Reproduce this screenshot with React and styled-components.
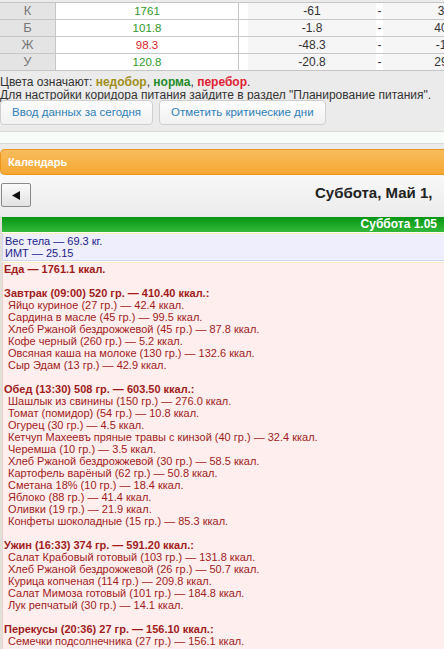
import React from "react";
import styled, { createGlobalStyle } from "styled-components";

const Global = createGlobalStyle`
  html, body { margin: 0; padding: 0; }
  body {
    background: #ebebeb;
    font-family: "Liberation Sans", Arial, sans-serif;
    overflow: hidden;
  }
`;

const Page = styled.div`
  width: 444px;
  overflow: hidden;
`;

const Top = styled.div`
  padding-top: 2px;
  background: #ebebeb;
`;

const StatsTable = styled.div`
  width: 640px;
  border-top: 1px solid #c6c6c6;
`;

const Row = styled.div`
  display: grid;
  grid-template-columns: 56px 183px 1fr;
  height: 16px;
  border-bottom: 1px solid #c6c6c6;
  background: #fff;
`;

const Label = styled.div`
  background: #e4e4e4;
  border-right: 1px solid #c6c6c6;
  color: #777;
  font-size: 13px;
  line-height: 16px;
  text-align: center;
`;

const Value = styled.div`
  border-right: 1px solid #c6c6c6;
  color: ${(p) => (p.$over ? "#e0202a" : "#2f9a2a")};
  font-size: 11.5px;
  line-height: 16px;
  text-align: center;
`;

const Range = styled.div`
  display: flex;
  align-items: stretch;
  padding-left: 9px;
`;

const RangeCell = styled.div`
  width: ${(p) => p.$w}px;
  flex-shrink: 0;
  background: #f6f6f6;
  color: #333;
  font-size: 12px;
  line-height: 16px;
  text-align: center;
`;

const Dash = styled.div`
  width: 7px;
  flex-shrink: 0;
  color: #333;
  font-size: 12px;
  line-height: 16px;
  text-align: center;
`;

const Legend = styled.div`
  margin-top: 5px;
  font-size: 12px;
  line-height: 13px;
  color: #333;
  white-space: nowrap;
`;

const Mark = styled.b`
  color: ${(p) => p.$c};
`;

const Buttons = styled.div`
  display: flex;
  gap: 6px;
  margin-top: -2px;
`;

const Button = styled.div`
  height: 23px;
  padding: 0 11px;
  border: 1px solid #cfcfcf;
  border-radius: 4px;
  background: linear-gradient(#fdfdfd, #f1f1f1);
  color: #2f80b8;
  font-size: 11.5px;
  line-height: 23px;
  white-space: nowrap;
`;

const Band = styled.div`
  margin-top: 6px;
  height: 11px;
  border-top: 1px solid #d8d8d8;
  border-bottom: 1px solid #d8d8d8;
  background: #f8fcf8;
`;

const Panel = styled.div`
  margin-top: 5px;
`;

const PanelHeader = styled.div`
  height: 24px;
  border: 1px solid #ec9418;
  border-right: none;
  border-radius: 5px 0 0 5px;
  background: linear-gradient(#f8bc5c, #f5a834);
  color: #fff;
  font-weight: bold;
  font-size: 11px;
  line-height: 24px;
  padding-left: 7px;
`;

const DateNav = styled.div`
  display: flex;
  align-items: flex-start;
  height: 34px;
  padding-top: 8px;
  background: linear-gradient(#f8f8f8, #ebebeb);
`;

const NavButton = styled.div`
  flex-shrink: 0;
  margin-left: 1px;
  width: 28px;
  height: 22px;
  border: 1px solid #8a8a8a;
  border-radius: 2px;
  background: linear-gradient(#fbfbfb, #e2e2e2);
  display: flex;
  align-items: center;
  justify-content: center;
`;

const DateTitle = styled.div`
  flex-shrink: 0;
  margin-left: 284px;
  margin-top: 1px;
  font-size: 15px;
  font-weight: bold;
  color: #222;
  white-space: nowrap;
`;

const Year = styled.span`
  margin-left: 14px;
`;

const Day = styled.div`
  border-left: 2px solid #e0e0d8;
  background: #fff;
`;

const DayHeader = styled.div`
  height: 15px;
  background: linear-gradient(#079614, #33b83a);
  color: #fff;
  font-weight: bold;
  font-size: 12px;
  line-height: 15px;
  text-align: right;
  padding-right: 7px;
`;

const InfoBox = styled.div`
  margin-top: 1px;
  border-top: 1px solid #f6efbf;
  background: ${(p) => p.$bg};
  color: ${(p) => p.$fg};
  border-left: 1px solid ${(p) => p.$bd};
  border-bottom: 1px solid ${(p) => p.$bd};
  padding: ${(p) => p.$pad};
  font-size: 11px;
  line-height: 12px;
  white-space: pre;
`;

const Line = styled.div`
  font-weight: ${(p) => (p.$bold ? "bold" : "normal")};
  padding-left: ${(p) => (p.$item ? "4px" : "0")};
  min-height: 12px;
`;

const rows = [
  { l: "К", v: "1761", a: "-61", b: "3" },
  { l: "Б", v: "101.8", a: "-1.8", b: "40" },
  { l: "Ж", v: "98.3", a: "-48.3", b: "-1", over: true },
  { l: "У", v: "120.8", a: "-20.8", b: "29" },
];

const food = [
  ["h", "Еда — 1761.1 ккал."],
  ["b", ""],
  ["h", "Завтрак (09:00) 520 гр. — 410.40 ккал.:"],
  ["i", "Яйцо куриное (27 гр.) — 42.4 ккал."],
  ["i", "Сардина в масле (45 гр.) — 99.5 ккал."],
  ["i", "Хлеб Ржаной бездрожжевой (45 гр.) — 87.8 ккал."],
  ["i", "Кофе черный (260 гр.) — 5.2 ккал."],
  ["i", "Овсяная каша на молоке (130 гр.) — 132.6 ккал."],
  ["i", "Сыр Эдам (13 гр.) — 42.9 ккал."],
  ["b", ""],
  ["h", "Обед (13:30) 508 гр. — 603.50 ккал.:"],
  ["i", "Шашлык из свинины (150 гр.) — 276.0 ккал."],
  ["i", "Томат (помидор) (54 гр.) — 10.8 ккал."],
  ["i", "Огурец (30 гр.) — 4.5 ккал."],
  ["i", "Кетчуп Махеевъ пряные травы с кинзой (40 гр.) — 32.4 ккал."],
  ["i", "Черемша (10 гр.) — 3.5 ккал."],
  ["i", "Хлеб Ржаной бездрожжевой (30 гр.) — 58.5 ккал."],
  ["i", "Картофель варёный (62 гр.) — 50.8 ккал."],
  ["i", "Сметана 18% (10 гр.) — 18.4 ккал."],
  ["i", "Яблоко (88 гр.) — 41.4 ккал."],
  ["i", "Оливки (19 гр.) — 21.9 ккал."],
  ["i", "Конфеты шоколадные (15 гр.) — 85.3 ккал."],
  ["b", ""],
  ["h", "Ужин (16:33) 374 гр. — 591.20 ккал.:"],
  ["i", "Салат Крабовый готовый (103 гр.) — 131.8 ккал."],
  ["i", "Хлеб Ржаной бездрожжевой (26 гр.) — 50.7 ккал."],
  ["i", "Курица копченая (114 гр.) — 209.8 ккал."],
  ["i", "Салат Мимоза готовый (101 гр.) — 184.8 ккал."],
  ["i", "Лук репчатый (30 гр.) — 14.1 ккал."],
  ["b", ""],
  ["h", "Перекусы (20:36) 27 гр. — 156.10 ккал.:"],
  ["i", "Семечки подсолнечника (27 гр.) — 156.1 ккал."],
];

export default function App() {
  return (
    <Page>
      <Global />
      <Top>
        <StatsTable>
          {rows.map((r) => (
            <Row key={r.l}>
              <Label>{r.l}</Label>
              <Value $over={r.over}>{r.v}</Value>
              <Range>
                <RangeCell $w={128}>{r.a}</RangeCell>
                <Dash>-</Dash>
                <RangeCell $w={116}>{r.b}</RangeCell>
              </Range>
            </Row>
          ))}
        </StatsTable>
        <Legend>
          Цвета означают: <Mark $c="#a0901a">недобор</Mark>,{" "}
          <Mark $c="#1e8c28">норма</Mark>, <Mark $c="#e01e34">перебор</Mark>.
          <br />
          Для настройки коридора питания зайдите в раздел "Планирование питания".
        </Legend>
        <Buttons>
          <Button>Ввод данных за сегодня</Button>
          <Button>Отметить критические дни</Button>
        </Buttons>
        <Band />
      </Top>
      <Panel>
        <PanelHeader>Календарь</PanelHeader>
        <DateNav>
          <NavButton>
            <svg width="8" height="9" viewBox="0 0 8 9">
              <path d="M0 4.5 L8 0 L8 9 Z" fill="#111" />
            </svg>
          </NavButton>
          <DateTitle>
            Суббота, Май 1,<Year>2021</Year>
          </DateTitle>
        </DateNav>
        <Day>
          <DayHeader>Суббота 1.05</DayHeader>
          <InfoBox $bg="#eeeefc" $fg="#1c1c8c" $bd="#d4d4ec" $pad="1px 0 1px 2px">
            <Line>Вес тела — 69.3 кг.</Line>
            <Line>ИМТ — 25.15</Line>
          </InfoBox>
          <InfoBox $bg="#ffeeee" $fg="#a01c1c" $bd="#ecd0d0" $pad="0 0 20px 1px">
            {food.map(([k, t], i) => (
              <Line key={i} $bold={k === "h"} $item={k === "i"}>
                {t}
              </Line>
            ))}
          </InfoBox>
        </Day>
      </Panel>
    </Page>
  );
}
